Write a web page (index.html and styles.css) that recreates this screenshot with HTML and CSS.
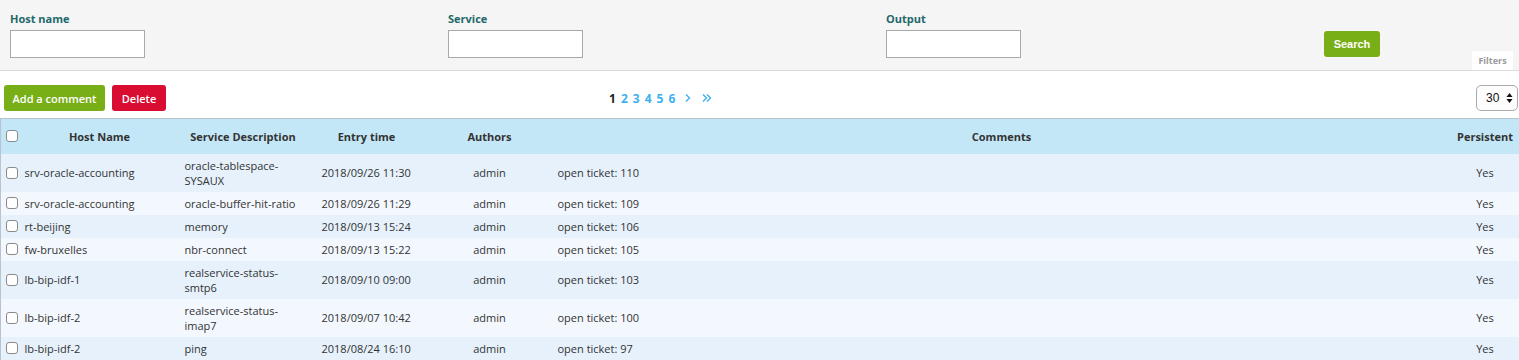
FILE: index.html
```html
<!DOCTYPE html>
<html>
<head>
<meta charset="utf-8">
<link rel="stylesheet" href="styles.css">
</head>
<body>
<div class="filters">
  <div class="field"><label>Host name</label><div class="input"></div></div>
  <div class="field"><label>Service</label><div class="input"></div></div>
  <div class="field"><label>Output</label><div class="input"></div></div>
  <div class="field search-cell"><button class="btn btn-green search">Search</button></div>
  <div class="filters-tab">Filters</div>
</div>
<div class="toolbar">
  <div class="actions">
    <button class="btn btn-green">Add a comment</button>
    <button class="btn btn-red">Delete</button>
  </div>
  <div class="pager">
    <span class="page current">1</span>
    <span class="page">2</span>
    <span class="page">3</span>
    <span class="page">4</span>
    <span class="page">5</span>
    <span class="page">6</span>
    <svg class="chev" width="8" height="10" viewBox="0 0 8 10"><path d="M2 1.5 L5.5 5 L2 8.5" fill="none" stroke="#3fb0ef" stroke-width="1.4"/></svg>
    <svg class="chev2" width="12" height="10" viewBox="0 0 12 10"><path d="M2 1.5 L5.5 5 L2 8.5 M6 1.5 L9.5 5 L6 8.5" fill="none" stroke="#3fb0ef" stroke-width="1.4"/></svg>
  </div>
  <div class="perpage">
    <span>30</span>
    <svg width="7" height="12" viewBox="0 0 7 12"><path d="M3.5 1 L6.5 5 L0.5 5 Z M3.5 11 L6.5 7 L0.5 7 Z" fill="#111"/></svg>
  </div>
</div>
<table class="grid">
  <colgroup>
    <col class="c-check"><col class="c-host"><col class="c-svc"><col class="c-time"><col class="c-auth"><col class="c-com"><col class="c-pers">
  </colgroup>
  <thead>
    <tr>
      <th><span class="cb"></span></th>
      <th>Host Name</th>
      <th class="svc">Service Description</th>
      <th>Entry time</th>
      <th class="auth">Authors</th>
      <th>Comments</th>
      <th>Persistent</th>
    </tr>
  </thead>
  <tbody>
    <tr><td><span class="cb"></span></td><td>srv-oracle-accounting</td><td>oracle-tablespace-<br>SYSAUX</td><td>2018/09/26 11:30</td><td class="auth">admin</td><td>open ticket: 110</td><td class="center">Yes</td></tr>
    <tr><td><span class="cb"></span></td><td>srv-oracle-accounting</td><td>oracle-buffer-hit-ratio</td><td>2018/09/26 11:29</td><td class="auth">admin</td><td>open ticket: 109</td><td class="center">Yes</td></tr>
    <tr><td><span class="cb"></span></td><td>rt-beijing</td><td>memory</td><td>2018/09/13 15:24</td><td class="auth">admin</td><td>open ticket: 106</td><td class="center">Yes</td></tr>
    <tr><td><span class="cb"></span></td><td>fw-bruxelles</td><td>nbr-connect</td><td>2018/09/13 15:22</td><td class="auth">admin</td><td>open ticket: 105</td><td class="center">Yes</td></tr>
    <tr><td><span class="cb"></span></td><td>lb-bip-idf-1</td><td>realservice-status-<br>smtp6</td><td>2018/09/10 09:00</td><td class="auth">admin</td><td>open ticket: 103</td><td class="center">Yes</td></tr>
    <tr><td><span class="cb"></span></td><td>lb-bip-idf-2</td><td>realservice-status-<br>imap7</td><td>2018/09/07 10:42</td><td class="auth">admin</td><td>open ticket: 100</td><td class="center">Yes</td></tr>
    <tr><td><span class="cb"></span></td><td>lb-bip-idf-2</td><td>ping</td><td>2018/08/24 16:10</td><td class="auth">admin</td><td>open ticket: 97</td><td class="center">Yes</td></tr>
  </tbody>
</table>
</body>
</html>
```
FILE: styles.css
```css
* { box-sizing: border-box; }
html, body { margin: 0; padding: 0; background: #fff; }
body { font-family: "Open Sans", "Liberation Sans", sans-serif; color: #333; font-size: 11px; }

.filters {
  position: relative;
  background: #f5f5f5;
  border-bottom: 1px solid #dcdcdc;
  height: 71px;
  padding: 11px 0 0 10px;
  display: grid;
  grid-template-columns: 438px 438px 438px 1fr;
}
.field { display: flex; flex-direction: column; }
.field label {
  font-weight: 700;
  font-size: 11px;
  line-height: 15px;
  color: #22686b;
  margin-bottom: 4px;
}
.input {
  width: 135px;
  height: 28px;
  background: #fff;
  border: 1px solid #a9a9a9;
}
.search-cell { justify-content: flex-end; padding-bottom: 13px; }
.filters-tab {
  position: absolute;
  right: 6px;
  bottom: 0;
  width: 41px;
  height: 19px;
  background: #fff;
  color: #999;
  font-size: 9px;
  font-weight: 700;
  text-align: center;
  line-height: 19px;
}

.btn {
  border: 0;
  border-radius: 3px;
  color: #fff;
  font-family: "Open Sans", "Liberation Sans", sans-serif;
  font-size: 11px;
  font-weight: 600;
  height: 26px;
  padding: 0 9px;
  cursor: pointer;
}
.btn-green { background: #78ae16; }
.btn-red { background: #d80d31; }
.search { width: 56px; padding: 0; font-family: "Liberation Sans", Arial, sans-serif; font-weight: 700; font-size: 11px; }

.toolbar {
  display: grid;
  grid-template-columns: 605px 1fr auto;
  align-items: center;
  height: 47px;
  padding: 14px 1px 7px 4px;
}
.actions { display: flex; gap: 7px; }
.actions .btn-green { width: 101px; padding: 0; }
.actions .btn-red { width: 54px; padding: 0; }
.pager { display: flex; align-items: center; gap: 5px; font-weight: 700; font-size: 12px; color: #3fb0ef; }
.pager .current { color: #222; }
.pager .chev { margin-left: 4px; }
.pager .chev2 { margin-left: 4px; }
.perpage {
  width: 42px;
  height: 26px;
  border: 1px solid #aaa;
  border-radius: 5px;
  background: #fdfdfd;
  display: flex;
  align-items: center;
  justify-content: space-between;
  padding: 0 4px 0 9px;
  font-family: "Liberation Sans", Arial, sans-serif;
  font-size: 12px;
  color: #111;
}

.grid {
  width: 100%;
  border-collapse: collapse;
  border-top: 1px solid #b7c3cf;
  border-left: 1px solid #b7c3cf;
  table-layout: fixed;
}
.c-check { width: 19px; }
.c-host { width: 160px; }
.c-svc { width: 137px; }
.c-time { width: 100px; }
.c-auth { width: 136px; }
.c-com { width: 898px; }
.c-pers { width: 69px; }
.grid th {
  background: #c4e7f8;
  height: 35px;
  font-weight: 700;
  font-size: 11px;
  text-align: center;
  padding: 0;
  color: #333;
}
.grid th.svc { padding-right: 10px; }
.grid td {
  padding: 4px 5px;
  line-height: 15px;
  font-size: 11px;
  vertical-align: middle;
  color: #333;
}
.grid th.auth, .grid td.auth { padding-left: 10px; padding-right: 0; text-align: center; }
.grid th:first-child, .grid td:first-child { padding: 0 0 0 5px; }
.grid tbody tr:nth-child(odd) td { background: #e6f1fc; }
.grid tbody tr:nth-child(even) td { background: #f3f8fe; }
.grid td.center { text-align: center; }
.cb {
  display: block;
  width: 12px;
  height: 12px;
  border: 1px solid #8a8a8a;
  border-radius: 3px;
  background: #fff;
}
```
